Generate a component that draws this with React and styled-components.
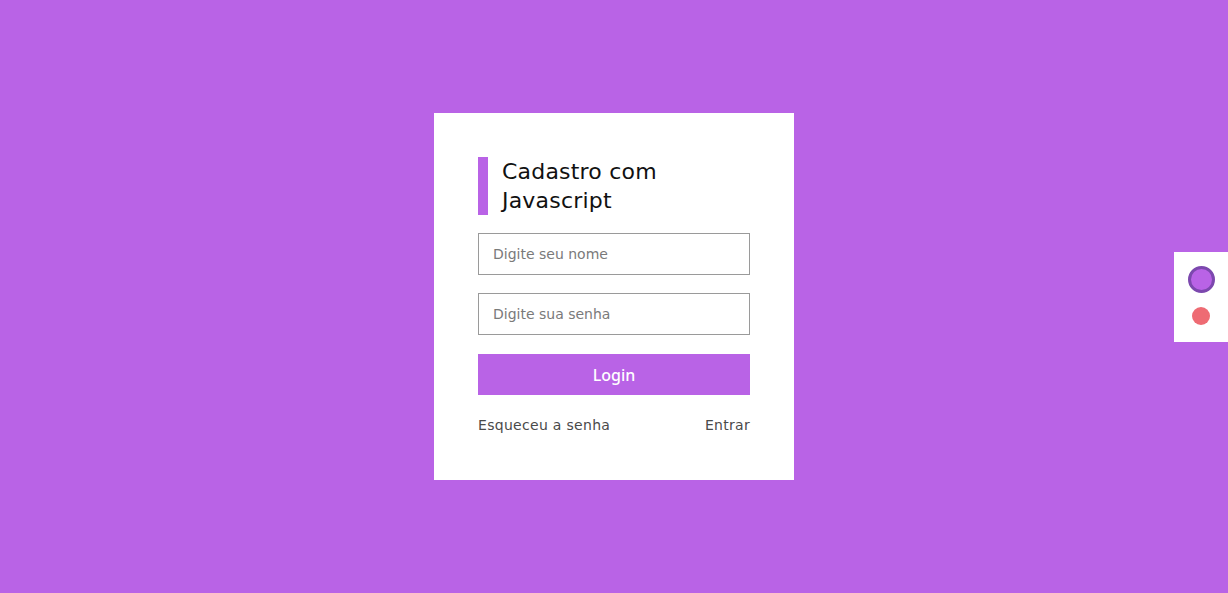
import React from 'react';
import styled, { createGlobalStyle } from 'styled-components';

const Global = createGlobalStyle`
  html, body {
    margin: 0;
    padding: 0;
    height: 100%;
  }
  body {
    background-color: #b963e6;
    font-family: 'DejaVu Sans', 'Noto Sans', sans-serif;
  }
  #root {
    height: 100%;
  }
`;

const Page = styled.div`
  display: flex;
  align-items: center;
  justify-content: center;
  width: 100%;
  height: 100vh;
  background-color: #b963e6;
`;

const Card = styled.div`
  box-sizing: border-box;
  width: 360px;
  height: 367px;
  padding: 44px 44px 0 44px;
  background-color: #ffffff;
  display: flex;
  flex-direction: column;
`;

const Title = styled.h1`
  margin: 0 0 18px 0;
  padding-left: 14px;
  border-left: 10px solid #b963e6;
  font-size: 22px;
  font-weight: 400;
  line-height: 29px;
  letter-spacing: 0.2px;
  color: #111;
`;

const Input = styled.input`
  box-sizing: border-box;
  width: 272px;
  height: 42px;
  margin-bottom: ${(p) => p.gap || 18}px;
  padding: 0 14px;
  border: 1px solid #9a9a9a;
  font-family: inherit;
  font-size: 14px;
  color: #333;
  outline: none;
  &::placeholder {
    color: #7a7a7a;
  }
`;

const Button = styled.button`
  width: 272px;
  height: 41px;
  border: none;
  background-color: #b963e6;
  color: #fff;
  font-family: 'Noto Sans', sans-serif;
  font-size: 16px;
  font-weight: 500;
  cursor: pointer;
`;

const Links = styled.div`
  display: flex;
  justify-content: space-between;
  margin-top: 22px;
`;

const LinkText = styled.a`
  font-size: 14px;
  letter-spacing: 0.3px;
  color: #4a4a4a;
  text-decoration: none;
  cursor: pointer;
`;

const Switcher = styled.div`
  position: fixed;
  right: 0;
  top: 252px;
  box-sizing: border-box;
  width: 54px;
  height: 90px;
  background-color: #ffffff;
  display: flex;
  flex-direction: column;
  align-items: center;
  padding-top: 14px;
  gap: 14px;
`;

const Dot = styled.span`
  box-sizing: border-box;
  display: block;
  width: ${(p) => p.size}px;
  height: ${(p) => p.size}px;
  border-radius: 50%;
  background-color: ${(p) => p.color};
  border: ${(p) => (p.ring ? `3px solid ${p.ring}` : 'none')};
`;

export default function App() {
  return (
    <>
      <Global />
      <Page>
        <Card>
          <Title>
            Cadastro com
            <br />
            Javascript
          </Title>
          <Input type="text" placeholder="Digite seu nome" />
          <Input type="password" placeholder="Digite sua senha" gap={19} />
          <Button>Login</Button>
          <Links>
            <LinkText>Esqueceu a senha</LinkText>
            <LinkText>Entrar</LinkText>
          </Links>
        </Card>
      </Page>
      <Switcher>
        <Dot size={27} color="#b963e6" ring="#7c48ae" />
        <Dot size={18} color="#ee6b73" />
      </Switcher>
    </>
  );
}
